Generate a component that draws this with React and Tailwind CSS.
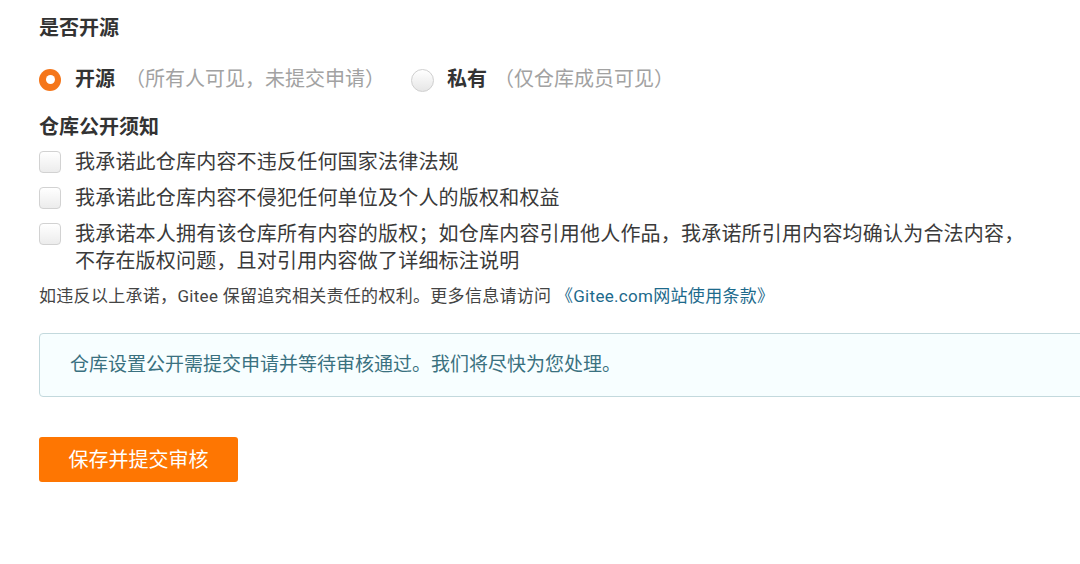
const FONT = 'font-[Roboto,"Noto_Sans_CJK_SC",sans-serif]';

const PROMISES = [
  ['我承诺此仓库内容不违反任何国家法律法规'],
  ['我承诺此仓库内容不侵犯任何单位及个人的版权和权益'],
  ['我承诺本人拥有该仓库所有内容的版权；如仓库内容引用他人作品，我承诺所引用内容均确认为合法内容，', '不存在版权问题，且对引用内容做了详细标注说明'],
];

function Radio({ checked }) {
  if (checked) {
    return (
      <span className="w-[22px] h-[22px] rounded-full bg-[#f5761a] flex items-center justify-center shrink-0">
        <span className="block w-[9px] h-[9px] rounded-full bg-white" />
      </span>
    );
  }
  return (
    <span className="block w-[23px] h-[23px] rounded-full border border-[#cfcfcf] bg-gradient-to-b from-white to-[#e6e6e6] shrink-0" />
  );
}

function Checkbox() {
  return (
    <span className="block mt-[2px] w-[22px] h-[22px] rounded-[4px] border border-[#d2d2d2] bg-gradient-to-b from-white to-[#ececec] shrink-0" />
  );
}

export default function App() {
  return (
    <div className={`${FONT} w-full h-[564px] bg-white overflow-hidden pl-[39px] pt-[15px] text-[#333]`}>
      <div className="text-[20px] leading-[27px] font-bold">是否开源</div>

      <div className="mt-[24px] flex items-center text-[20px] leading-[27px]">
        <Radio checked />
        <span className="ml-[14px] font-bold">开源</span>
        <span className="ml-[10px] text-[#a2a2a2]">（所有人可见，未提交申请）</span>
        <span className="ml-[26px] mt-[2px]"><Radio /></span>
        <span className="ml-[13px] font-bold">私有</span>
        <span className="ml-[7px] text-[#a2a2a2]">（仅仓库成员可见）</span>
      </div>

      <div className="mt-[21px] text-[20px] leading-[27px] font-bold">仓库公开须知</div>

      <div className="mt-[8px] flex flex-col gap-[9px]">
        {PROMISES.map((lines) => (
          <label key={lines[0]} className="flex items-start text-[20px] leading-[27px] text-[#3a3a3a]">
            <Checkbox />
            <span className="ml-[14px] tracking-[0.2px] whitespace-nowrap">
              {lines.map((l, i) => (
                <span key={i} className="block">{l}</span>
              ))}
            </span>
          </label>
        ))}
      </div>

      <div className="mt-[8px] text-[17px] leading-[27px] tracking-[0.3px] text-[#444]">
        如违反以上承诺，Gitee 保留追究相关责任的权利。更多信息请访问 <a className="text-[#1d6a8c]">《Gitee.com网站使用条款》</a>
      </div>

      <div className="mt-[23px] -mr-4 h-[64px] flex items-center pl-[30px] rounded-[4px] border border-[#c3d9dd] bg-[#f7feff] text-[19px] text-[#3a7180]">
        仓库设置公开需提交申请并等待审核通过。我们将尽快为您处理。
      </div>

      <button className="mt-[40px] w-[199px] h-[45px] rounded-[3px] bg-[#fe7602] text-white text-[20px] flex items-center justify-center">
        保存并提交审核
      </button>
    </div>
  );
}
